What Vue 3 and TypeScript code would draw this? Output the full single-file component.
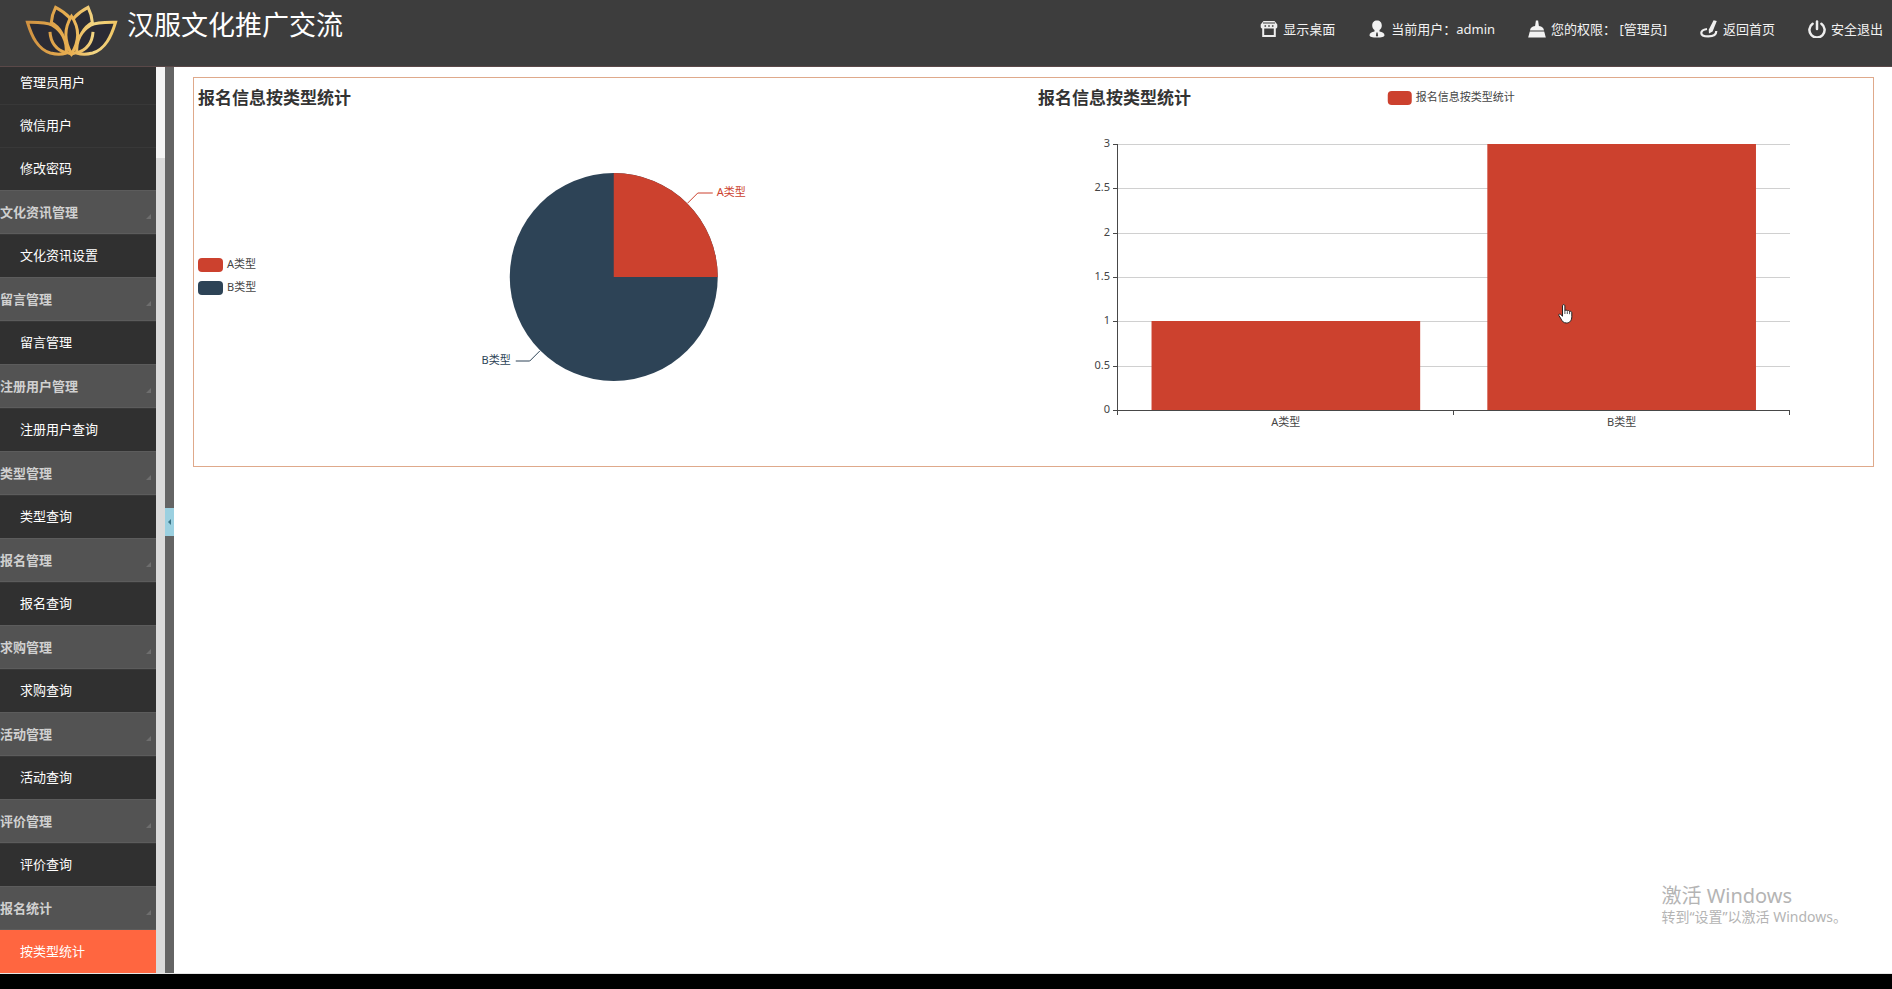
<script setup lang="ts">
interface MenuGroup {
  title: string
  items: string[]
}

interface Slice {
  name: string
  value: number
}

const accountItems: string[] = ['管理员用户', '微信用户', '修改密码']

const groups: MenuGroup[] = [
  { title: '文化资讯管理', items: ['文化资讯设置'] },
  { title: '留言管理', items: ['留言管理'] },
  { title: '注册用户管理', items: ['注册用户查询'] },
  { title: '类型管理', items: ['类型查询'] },
  { title: '报名管理', items: ['报名查询'] },
  { title: '求购管理', items: ['求购查询'] },
  { title: '活动管理', items: ['活动查询'] },
  { title: '评价管理', items: ['评价查询'] },
  { title: '报名统计', items: ['按类型统计'] },
]

const activeItem = '按类型统计'
const chartTitle = '报名信息按类型统计'

const data: Slice[] = [
  { name: 'A类型', value: 1 },
  { name: 'B类型', value: 3 },
]

// Vertical extent of the plot area inside the bar chart
const plotTop = 66
const plotBase = 332
const maxValue = 3

const yOf = (v: number): number => Math.round(plotBase - (v / maxValue) * (plotBase - plotTop))

const ticks = [0, 0.5, 1, 1.5, 2, 2.5, 3].map((v) => ({ label: String(v), y: yOf(v) }))

// The plot spans 10%–90% of the width; each bar fills 80% of its band
const band = 80 / data.length
const bars = data.map((d, i) => ({
  name: d.name,
  x: `${10 + band * i + band * 0.1}%`,
  width: `${band * 0.8}%`,
  center: `${10 + band * (i + 0.5)}%`,
  y: yOf(d.value),
  height: plotBase - yOf(d.value),
}))
const edges = [10, 50, 90].map((p) => `${p}%`)
</script>

<template>
  <div class="page">
    <header class="topbar">
      <svg class="logo" viewBox="72 12 284 160" aria-hidden="true">
        <defs>
          <linearGradient id="gold" x1="75" y1="0" x2="352" y2="0" gradientUnits="userSpaceOnUse">
            <stop offset="0" stop-color="#cf9040" />
            <stop offset="0.5" stop-color="#e9b052" />
            <stop offset="0.75" stop-color="#f3d684" />
            <stop offset="1" stop-color="#f0c562" />
          </linearGradient>
        </defs>
        <g fill="#2b2b34" stroke="url(#gold)" stroke-width="9" stroke-linejoin="miter">
          <path d="M166 22C158 38 154 52 153 68C180 82 196 112 199 158L214 163C242 120 240 60 166 22Z" />
          <path d="M264 22C272 38 276 52 277 68C250 82 234 112 231 158L214 163C188 120 190 60 264 22Z" />
          <path d="M214 49C192 84 192 124 214 163C238 124 238 84 214 49Z" />
          <path d="M81 67C110 67 138 66 156 76C186 94 200 126 198 160C186 164 166 164 150 160C112 148 94 110 81 67Z" />
          <path d="M347 67C318 67 290 66 272 76C242 94 228 126 230 160C242 164 262 164 278 160C316 148 334 110 347 67Z" />
          <path d="M149 96C151 128 166 150 199 160" fill="none" />
          <path d="M279 96C277 128 262 150 229 160" fill="none" />
        </g>
      </svg>
      <h1>汉服文化推广交流</h1>
      <nav class="tools" aria-label="用户操作">
        <a href="#desktop">
          <svg viewBox="0 0 18 18" aria-hidden="true">
            <path d="M3.500 1h11l2.800 3.600v2.600a2 2 0 0 1-2.100 1.300H2.800A2 2 0 0 1 .7 7.200V4.600z" fill="#eee" />
            <path d="M3 3h12" stroke="#3d3d3d" stroke-width="1" />
            <path d="M4.500 6h1.600M8.200 6h1.600M11.900 6h1.600" stroke="#3d3d3d" stroke-width="1.600" />
            <path d="M3.200 8v8h11.600V8" fill="none" stroke="#eee" stroke-width="2" />
          </svg>
          <span>显示桌面</span>
        </a>
        <span class="tool">
          <svg viewBox="0 0 18 18" aria-hidden="true">
            <path d="M9 .5c3 0 4.800 2.100 4.800 4.900 0 2.200-1 3.700-2.300 4.700v1.300c2.800.4 5 1.600 5 3.800 0 1.700-3 2.400-7.500 2.400s-7.500-.7-7.500-2.400c0-2.200 2.200-3.400 5-3.800v-1.300C5.200 9.100 4.200 7.600 4.200 5.400 4.200 2.600 6 .5 9 .5z" fill="#f2f2f2" />
            <path d="M8.400 12.500h1.200l.5 3.200-1.100 1-1.100-1z" fill="#3d3d3d" />
          </svg>
          <span>当前用户：admin</span>
        </span>
        <span class="tool">
          <svg viewBox="0 0 18 18" aria-hidden="true">
            <path d="M7.900.500h2.200l.8 5.500c3.200.6 4.900 2 5.100 4.500H2C2.200 8 3.900 6.600 7.100 6z" fill="#f2f2f2" />
            <path d="M1.800 11.500h14.400l1.600 6H.2z" fill="#f2f2f2" />
          </svg>
          <span>您的权限： [管理员]</span>
        </span>
        <a href="#home">
          <svg viewBox="0 0 18 18" aria-hidden="true">
            <path d="M13.600.200l3.200.9-4.200 10.300-3.600 2.100-.3-3.700z" fill="#eee" />
            <path d="M7 9C3.500 9.500 1.300 11 1.300 13c0 2 2.700 3.400 7 3.400 4.500 0 8-1.800 8-5.400" fill="none" stroke="#eee" stroke-width="2.200" />
          </svg>
          <span>返回首页</span>
        </a>
        <a href="#logout">
          <svg viewBox="0 0 18 18" aria-hidden="true">
            <path d="M4.600 3.700a7.600 7.600 0 1 0 8.800 0" fill="none" stroke="#eee" stroke-width="2.500" stroke-linecap="round" />
            <path d="M9 1.500v7.500" stroke="#eee" stroke-width="2.500" stroke-linecap="round" />
          </svg>
          <span>安全退出</span>
        </a>
      </nav>
    </header>

    <div class="body">
      <nav class="sidebar" aria-label="主菜单">
        <a v-for="item in accountItems" :key="item" class="item" href="#">{{ item }}</a>
        <template v-for="group in groups" :key="group.title">
          <button class="group" type="button">
            <span>{{ group.title }}</span>
            <i class="corner"></i>
          </button>
          <a
            v-for="item in group.items"
            :key="item"
            class="item"
            :class="{ active: item === activeItem }"
            href="#"
          >{{ item }}</a>
        </template>
      </nav>
      <div class="scrollbar"><div class="thumb"></div></div>
      <div class="splitter">
        <button class="collapse" type="button" aria-label="收起菜单">
          <svg viewBox="0 0 9 28" aria-hidden="true"><path d="M6 11v6l-3-3z" fill="#3b7486" /></svg>
        </button>
      </div>

      <main class="content">
        <section class="panel">
          <svg class="chart" role="img" aria-label="报名信息按类型统计饼图">
            <text class="title" x="4" y="26">{{ chartTitle }}</text>
            <rect class="red" x="4" y="180" width="25" height="14" rx="4" />
            <text x="33" y="190">{{ data[0].name }}</text>
            <rect class="navy" x="4" y="203" width="25" height="14" rx="4" />
            <text x="33" y="213">{{ data[1].name }}</text>
            <svg x="50%" y="199" class="origin">
              <circle class="navy" r="104" />
              <path class="red" d="M0 0V-104A104 104 0 0 1 104 0Z" />
              <path class="lead red-line" d="M74 -74L84 -84H99" />
              <text class="red" x="103" y="-81">{{ data[0].name }}</text>
              <path class="lead navy-line" d="M-74 74L-84 84H-98" />
              <text class="navy" x="-103" y="87" text-anchor="end">{{ data[1].name }}</text>
            </svg>
          </svg>

          <svg class="chart" role="img" aria-label="报名信息按类型统计柱状图">
            <text class="title" x="4" y="26">{{ chartTitle }}</text>
            <svg x="50%" y="0" class="origin">
              <rect class="red" x="-66" y="13" width="24" height="14" rx="4" />
              <text x="-38" y="23">{{ chartTitle }}</text>
            </svg>
            <line
              v-for="t in ticks"
              :key="'g' + t.label"
              class="grid"
              x1="10%"
              x2="90%"
              :y1="t.y"
              :y2="t.y"
            />
            <rect
              v-for="b in bars"
              :key="b.name"
              class="red"
              :x="b.x"
              :y="b.y"
              :width="b.width"
              :height="b.height"
            />
            <line class="axis" x1="10%" x2="10%" :y1="plotTop" :y2="plotBase" />
            <line class="axis" x1="10%" x2="90%" :y1="plotBase" :y2="plotBase" />
            <line v-for="e in edges" :key="e" class="axis" :x1="e" :x2="e" :y1="plotBase" :y2="plotBase + 5" />
            <svg x="10%" y="0" class="origin">
              <g v-for="t in ticks" :key="t.label">
                <line class="axis" x1="-5" x2="0" :y1="t.y" :y2="t.y" />
                <text x="-8" :y="t.y + 3" text-anchor="end">{{ t.label }}</text>
              </g>
            </svg>
            <text v-for="b in bars" :key="'n' + b.name" :x="b.center" y="348" text-anchor="middle">{{ b.name }}</text>
          </svg>

          <svg class="pointer" viewBox="0 0 16 20" aria-hidden="true">
            <path
              d="M4.500 1.800c0-1.600 2.400-1.600 2.400 0v5c.2-1 2.300-1 2.400.3.400-.9 2.200-.7 2.300.6.500-.7 2.200-.5 2.200 1v4c0 3.500-1.800 6.300-5.300 6.300-3 0-4.200-1.600-5.300-3.800L.9 11.500c-.6-1.400 1-2 1.900-1l1.700 1.700z"
              fill="#fff"
              stroke="#222"
              stroke-width="1"
            />
            <path d="M6.900 7v3M9.300 7.500v2.500M11.600 8v2.200" stroke="#222" stroke-width="0.800" />
          </svg>
        </section>

        <aside class="watermark">
          <p class="big">激活 Windows</p>
          <p>转到“设置”以激活 Windows。</p>
        </aside>
      </main>
    </div>
    <footer class="strip"></footer>
  </div>
</template>

<style>
body {
  margin: 0;
}
</style>

<style scoped>
.page {
  display: flex;
  flex-direction: column;
  height: 100vh;
  font: 13px/20px "Noto Sans", "Noto Sans CJK SC", sans-serif;
  background: #fff;
  overflow: hidden;
}

.topbar {
  flex: none;
  display: flex;
  align-items: flex-start;
  height: 67px;
  box-sizing: border-box;
  padding: 4px 9px 0 24px;
  border-bottom: 1px solid #5a4848;
  background: #3d3d3d;
  color: #f2f2f2;
}

.logo {
  width: 95px;
  height: 53px;
}

h1 {
  margin: 0 0 0 8px;
  font-size: 27px;
  line-height: 42px;
  font-weight: 400;
  color: #fff;
}

.tools {
  display: flex;
  gap: 33px;
  margin: 15px 0 0 auto;
}

.tools a,
.tool {
  display: flex;
  align-items: center;
  gap: 5px;
  color: inherit;
  text-decoration: none;
  white-space: nowrap;
}

.tools svg {
  width: 18px;
  height: 18px;
}

.body {
  flex: 1;
  display: flex;
  min-height: 0;
}

.sidebar {
  width: 156px;
  flex: none;
  display: flex;
  flex-direction: column;
  justify-content: flex-end;
  overflow: hidden;
  background: #303030;
}

.item {
  flex: none;
  height: 43px;
  box-sizing: border-box;
  padding-left: 20px;
  border-top: 1px solid #383838;
  line-height: 40px;
  color: #fff;
  text-decoration: none;
}

.item.active {
  background: #ff6640;
  border-color: #ff6640;
}

.group {
  flex: none;
  display: flex;
  align-items: center;
  justify-content: space-between;
  height: 44px;
  padding: 0 5px 0 0;
  border: 0;
  border-top: 1px solid #5c5c5c;
  border-bottom: 1px solid #5c5c5c;
  background: #535353;
  color: #d0d0d0;
  font: inherit;
  font-weight: 700;
  text-align: left;
}

.corner {
  margin-top: 8px;
  border-left: 5px solid transparent;
  border-bottom: 5px solid #6e6e6e;
}

.scrollbar {
  width: 9px;
  flex: none;
  background: #f4f4f4;
  display: flex;
  flex-direction: column;
  justify-content: flex-end;
}

.thumb {
  height: 90%;
  background: #dadada;
}

.splitter {
  width: 9px;
  flex: none;
  display: flex;
  align-items: center;
  box-sizing: border-box;
  padding-top: 4px;
  background: #646464;
}

.collapse {
  width: 9px;
  height: 28px;
  padding: 0;
  border: 0;
  background: #9bd0e0;
}

.collapse svg {
  display: block;
  width: 9px;
  height: 28px;
}

.content {
  position: relative;
  flex: 1;
  min-width: 0;
  padding: 10px 18px 0 19px;
}

.panel {
  position: relative;
  display: flex;
  border: 1px solid #dfa98b;
}

.chart {
  flex: 1;
  min-width: 0;
  height: 388px;
  font-size: 11px;
  fill: #444;
}

.title {
  font-size: 17px;
  font-weight: 700;
  fill: #333;
}

.origin {
  overflow: visible;
}

.red {
  fill: #cc412e;
}

.navy {
  fill: #2d4356;
}

.lead {
  fill: none;
}

.red-line {
  stroke: #cc412e;
}

.navy-line {
  stroke: #2d4356;
}

.grid {
  stroke: #d0d0d0;
  shape-rendering: crispEdges;
}

.axis {
  stroke: #484848;
  shape-rendering: crispEdges;
}

.pointer {
  position: absolute;
  left: calc(81% + 4px);
  top: 226px;
  width: 16px;
  height: 20px;
}

.watermark {
  position: absolute;
  right: 45px;
  bottom: 46px;
  color: #b4b4b4;
  font-size: 14px;
}

.watermark p {
  margin: 0;
}

.watermark .big {
  font-size: 20px;
  line-height: 22px;
}

.strip {
  flex: none;
  height: 16px;
  box-sizing: border-box;
  border-top: 1px solid #e6e6e6;
  background: #000;
}
</style>
